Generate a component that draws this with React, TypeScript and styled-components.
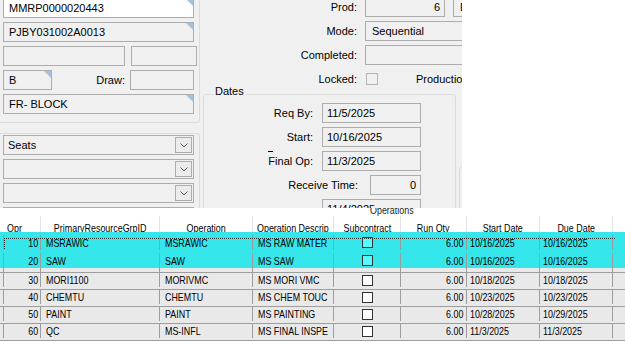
import React from "react";
import styled, { createGlobalStyle, css } from "styled-components";

const Global = createGlobalStyle`
  html, body { margin: 0; padding: 0; background: #fff; }
  body { font-family: "Liberation Sans", Arial, sans-serif; font-size: 11px; color: #000; }
  #root { width: 625px; height: 355px; overflow: hidden; }
`;

const Page = styled.div`
  width: 625px;
  height: 355px;
  display: flex;
  flex-direction: column;
  overflow: hidden;
  background: #fff;
`;

/* ---------- top form ---------- */
const Form = styled.div`
  flex: none;
  width: 462px;
  height: 208px;
  background: #f0f0f0;
  overflow: hidden;
  display: flex;
  gap: 3px;
`;

const LeftCol = styled.div`
  flex: none;
  width: 200px;
  display: flex;
  flex-direction: column;
`;

const Group = styled.div<{ $top?: boolean }>`
  box-sizing: border-box;
  width: 204px;
  margin-left: -4px;
  border: 1px solid #dcdcdc;
  border-radius: 3px;
  display: flex;
  flex-direction: column;
  gap: 4px;
  ${(p) =>
    p.$top
      ? css`
          margin-top: -9px;
          padding: 6px 5px 8px 6px;
        `
      : css`
          margin-top: 10px;
          padding: 1px 5px 0 6px;
          border-bottom: none;
          flex: 1;
        `}
`;

const Box = styled.div<{
  $w?: number;
  $white?: boolean;
  $tri?: boolean;
  $right?: boolean;
  $pad?: number;
}>`
  position: relative;
  box-sizing: border-box;
  flex: none;
  height: 20px;
  width: ${(p) => (p.$w ? `${p.$w}px` : "100%")};
  border: 1px solid #adadad;
  background: ${(p) => (p.$white ? "#fff" : "#f0f0f0")};
  display: flex;
  align-items: center;
  justify-content: ${(p) => (p.$right ? "flex-end" : "flex-start")};
  padding: 0 ${(p) => p.$pad ?? 4}px;
  white-space: nowrap;
  overflow: hidden;
  ${(p) =>
    p.$tri &&
    css`
      &::after {
        content: "";
        position: absolute;
        top: 0;
        right: 0;
        border-style: solid;
        border-width: 0 7px 7px 0;
        border-color: transparent #a6c0e1 transparent transparent;
      }
    `}
`;

const Row = styled.div<{ $gap?: number }>`
  display: flex;
  align-items: center;
  height: 20px;
  gap: ${(p) => p.$gap ?? 6}px;
  flex: none;
`;

const Label = styled.span<{ $w?: number; $ml?: number }>`
  flex: none;
  white-space: nowrap;
  text-align: right;
  ${(p) => (p.$w ? `width: ${p.$w}px;` : "")}
  ${(p) => (p.$ml ? `margin-left: ${p.$ml}px;` : "")}
`;

const Spacer = styled.span`
  flex: 1;
`;

const Combo = styled.div`
  box-sizing: border-box;
  flex: none;
  height: 20px;
  border: 1px solid #adadad;
  background: #f0f0f0;
  display: flex;
  align-items: center;
  padding: 0 1px 0 4px;
`;

const ComboText = styled.span`
  flex: 1;
`;

const DropBtn = styled.span`
  box-sizing: border-box;
  width: 17px;
  height: 16px;
  border: 1px solid #adadad;
  background: #ececec;
  display: flex;
  align-items: center;
  justify-content: center;
`;

const Chevron = () => (
  <svg width="8" height="5" viewBox="0 0 8 5">
    <path d="M0.5 0.5 L4 4 L7.5 0.5" fill="none" stroke="#555" strokeWidth="1" />
  </svg>
);

const MidCol = styled.div`
  flex: none;
  width: 259px;
  display: flex;
  flex-direction: column;
`;

const TopFields = styled.div`
  margin-top: -3px;
  display: flex;
  flex-direction: column;
  gap: 4px;
`;

const Check = styled.span<{ $ml?: number }>`
  box-sizing: border-box;
  flex: none;
  width: 12px;
  height: 12px;
  border: 1px solid #b5b5b5;
  background: #f0f0f0;
  margin-left: ${(p) => p.$ml ?? 0}px;
`;

const LowerRow = styled.div`
  margin-top: -3px;
  display: flex;
  gap: 3px;
  align-items: flex-start;
`;

const Fieldset = styled.fieldset`
  box-sizing: border-box;
  flex: none;
  width: 253px;
  min-width: 0;
  margin: 0;
  padding: 0 0 10px 0;
  border: 1px solid #dcdcdc;
  border-radius: 3px;
  display: flex;
  flex-direction: column;
  gap: 4px;
`;

const Legend = styled.legend`
  margin-left: 9px;
  padding: 0 2px 6px 2px;
  line-height: 11px;
`;

const DashLabel = styled.span`
  flex: none;
  width: 109px;
  display: flex;
  justify-content: flex-end;
  margin-bottom: 4px;
`;

const DashStack = styled.span`
  display: inline-flex;
  flex-direction: column;
  align-items: flex-start;
  line-height: 11px;
`;

const Dash = styled.span`
  width: 5px;
  height: 1px;
  background: #000;
  margin-bottom: 4px;
`;

const SideGroup = styled.div`
  box-sizing: border-box;
  flex: none;
  width: 30px;
  height: 60px;
  margin-top: 81px;
  border: 1px solid #dcdcdc;
  border-radius: 3px;
`;

/* ---------- grid ---------- */
const COLS = "3px 37px 119px 93px 81px 67px 66px 73px 73px 10px 3px";

const GridWrap = styled.div`
  flex: none;
  height: 133px;
  overflow: hidden;
  background: #fff;
  font-family: "Liberation Sans", Arial, sans-serif;
  font-size: 11px;
  display: flex;
  flex-direction: column;
`;

/* narrow grid lettering, like the reference's condensed grid font */
const Txt = styled.span<{ $o?: "left" | "right" | "center" }>`
  display: inline-block;
  white-space: nowrap;
  transform: scaleX(0.81);
  transform-origin: ${(p) => p.$o ?? "left"} center;
`;

const CaptionBar = styled.div`
  flex: none;
  height: 8px;
`;

const CaptionText = styled.div`
  margin: -3px 0 0 370px;
  line-height: 11px;
  color: #222;
`;

const HeadRow = styled.div`
  flex: none;
  display: grid;
  grid-template-columns: ${COLS};
  height: 16px;
`;

const HeadCell = styled.div<{ $align?: "left" | "center"; $line?: boolean }>`
  box-sizing: border-box;
  display: flex;
  align-items: flex-start;
  justify-content: ${(p) => (p.$align === "left" ? "flex-start" : "center")};
  padding: 6px 0 0 ${(p) => (p.$align === "left" ? 4 : 0)}px;
  line-height: 12px;
  white-space: nowrap;
  overflow: hidden;
  border-left: ${(p) => (p.$line ? "1px solid #e3e3e3" : "none")};
`;

const DataRow = styled.div<{ $sel?: boolean; $focus?: boolean }>`
  position: relative;
  flex: none;
  box-sizing: border-box;
  display: grid;
  grid-template-columns: ${COLS};
  ${(p) =>
    p.$sel
      ? css`
          height: 18px;
          background: #35e7eb;
          padding-top: 3px;
        `
      : css`
          height: 17px;
          background: #e9e9e9;
          border-bottom: 1px solid #9d9d9d;
          padding-bottom: 2px;
        `}
  ${(p) =>
    p.$focus &&
    css`
      &::after {
        content: "";
        position: absolute;
        left: 4px;
        right: 10px;
        top: 6px;
        height: 15px;
        border-top: 1px dotted #333;
        border-bottom: 1px dotted #333;
        border-left: 1px dotted #333;
        pointer-events: none;
      }
    `}
`;

const GapRow = styled.div`
  flex: none;
  box-sizing: border-box;
  height: 5px;
  display: grid;
  grid-template-columns: ${COLS};
  background: #e9e9e9;
  border-bottom: 1px solid #9d9d9d;
`;

const Cell = styled.div<{ $align?: "left" | "right" | "center"; $pl?: number; $pr?: number; $line?: boolean }>`
  box-sizing: border-box;
  display: flex;
  align-items: center;
  justify-content: ${(p) =>
    p.$align === "right" ? "flex-end" : p.$align === "center" ? "center" : "flex-start"};
  padding-left: ${(p) => p.$pl ?? 0}px;
  padding-right: ${(p) => p.$pr ?? 0}px;
  border-left: ${(p) => (p.$line === false ? "none" : "1px solid #9d9d9d")};
  white-space: nowrap;
  overflow: hidden;
  line-height: 12px;
`;

const GridCheck = styled.span<{ $sel?: boolean }>`
  box-sizing: border-box;
  width: 11px;
  height: 11px;
  border: 1px solid #333;
  background: ${(p) => (p.$sel ? "#55fbfd" : "#fff")};
`;

const GreenBar = styled.div`
  flex: 1;
  background: #90ee90;
`;

type Op = {
  opr: number;
  res: string;
  op: string;
  desc: string;
  qty: string;
  start: string;
  due: string;
};

const ops: Op[] = [
  { opr: 10, res: "MSRAWIC", op: "MSRAWIC", desc: "MS RAW MATER", qty: "6.00", start: "10/16/2025", due: "10/16/2025" },
  { opr: 20, res: "SAW", op: "SAW", desc: "MS SAW", qty: "6.00", start: "10/16/2025", due: "10/16/2025" },
  { opr: 30, res: "MORI1100", op: "MORIVMC", desc: "MS MORI VMC", qty: "6.00", start: "10/18/2025", due: "10/18/2025" },
  { opr: 40, res: "CHEMTU", op: "CHEMTU", desc: "MS CHEM TOUC", qty: "6.00", start: "10/23/2025", due: "10/23/2025" },
  { opr: 50, res: "PAINT", op: "PAINT", desc: "MS PAINTING", qty: "6.00", start: "10/28/2025", due: "10/29/2025" },
  { opr: 60, res: "QC", op: "MS-INFL", desc: "MS FINAL INSPE", qty: "6.00", start: "11/3/2025", due: "11/3/2025" },
];

const OpCells = ({ o, sel }: { o: Op; sel?: boolean }) => (
  <>
    <Cell $line={false} />
    <Cell $align="right" $pr={2}><Txt $o="right">{o.opr}</Txt></Cell>
    <Cell $pl={5}><Txt>{o.res}</Txt></Cell>
    <Cell $pl={5}><Txt>{o.op}</Txt></Cell>
    <Cell $pl={5}><Txt>{o.desc}</Txt></Cell>
    <Cell $align="center">
      <GridCheck $sel={sel} />
    </Cell>
    <Cell $align="right" $pr={3}><Txt $o="right">{o.qty}</Txt></Cell>
    <Cell $pl={3}><Txt>{o.start}</Txt></Cell>
    <Cell $pl={3}><Txt>{o.due}</Txt></Cell>
    <Cell />
    <Cell $line={false} />
  </>
);

export default function App() {
  return (
    <Page>
      <Global />
      <Form>
        <LeftCol>
          <Group $top>
            <Box $white $tri $pad={5}>MMRP0000020443</Box>
            <Box $tri $pad={5}>PJBY031002A0013</Box>
            <Row $gap={6}>
              <Box $w={122} />
              <Box $w={66} />
            </Row>
            <Row $gap={5}>
              <Box $w={49} $tri $pad={5}>B</Box>
              <Spacer />
              <Label>Draw:</Label>
              <Box $w={64} />
            </Row>
            <Box $tri $pad={5}>FR- BLOCK</Box>
          </Group>
          <Group>
            <Combo>
              <ComboText>Seats</ComboText>
              <DropBtn><Chevron /></DropBtn>
            </Combo>
            <Combo>
              <ComboText />
              <DropBtn><Chevron /></DropBtn>
            </Combo>
            <Combo>
              <ComboText />
              <DropBtn><Chevron /></DropBtn>
            </Combo>
            <Combo>
              <ComboText />
              <DropBtn><Chevron /></DropBtn>
            </Combo>
          </Group>
        </LeftCol>
        <MidCol>
          <TopFields>
            <Row $gap={8}>
              <Label $w={154}>Prod:</Label>
              <Box $w={80} $right>6</Box>
              <Box $w={40} $pad={6}>E</Box>
            </Row>
            <Row $gap={8}>
              <Label $w={154}>Mode:</Label>
              <Box $w={120} $pad={6}>Sequential</Box>
            </Row>
            <Row $gap={8}>
              <Label $w={154}>Completed:</Label>
              <Box $w={120} />
            </Row>
            <Row $gap={8}>
              <Label $w={154}>Locked:</Label>
              <Check $ml={1} />
              <Label $ml={30}>Production</Label>
            </Row>
          </TopFields>
          <LowerRow>
            <Fieldset>
              <Legend>Dates</Legend>
              <Row $gap={9}>
                <Label $w={109}>Req By:</Label>
                <Box $w={99}>11/5/2025</Box>
              </Row>
              <Row $gap={9}>
                <Label $w={109}>Start:</Label>
                <Box $w={99}>10/16/2025</Box>
              </Row>
              <Row $gap={9}>
                <DashLabel>
                  <DashStack>
                    <Dash />
                    <span>Final Op:</span>
                  </DashStack>
                </DashLabel>
                <Box $w={99}>11/3/2025</Box>
              </Row>
              <Row $gap={12}>
                <Label $w={154}>Receive Time:</Label>
                <Box $w={51} $right>0</Box>
              </Row>
              <Row $gap={9}>
                <Label $w={109} />
                <Box $w={99}>11/4/2025</Box>
              </Row>
            </Fieldset>
            <SideGroup />
          </LowerRow>
        </MidCol>
      </Form>
      <GridWrap>
        <CaptionBar>
          <CaptionText><Txt>Operations</Txt></CaptionText>
        </CaptionBar>
        <HeadRow>
          <HeadCell />
          <HeadCell $align="left"><Txt>Opr</Txt></HeadCell>
          <HeadCell $line><Txt $o="center">PrimaryResourceGrpID</Txt></HeadCell>
          <HeadCell $line><Txt $o="center">Operation</Txt></HeadCell>
          <HeadCell $line $align="left"><Txt>Operation Descrip</Txt></HeadCell>
          <HeadCell $line><Txt $o="center">Subcontract</Txt></HeadCell>
          <HeadCell $line><Txt $o="center">Run Qty</Txt></HeadCell>
          <HeadCell $line><Txt $o="center">Start Date</Txt></HeadCell>
          <HeadCell $line><Txt $o="center">Due Date</Txt></HeadCell>
          <HeadCell $line />
          <HeadCell />
        </HeadRow>
        {ops.slice(0, 2).map((o, i) => (
          <DataRow key={o.opr} $sel $focus={i === 0}>
            <OpCells o={o} sel />
          </DataRow>
        ))}
        <GapRow>
          <Cell $line={false} />
          <Cell />
          <Cell />
          <Cell />
          <Cell />
          <Cell />
          <Cell />
          <Cell />
          <Cell />
          <Cell />
          <Cell $line={false} />
        </GapRow>
        {ops.slice(2).map((o) => (
          <DataRow key={o.opr}>
            <OpCells o={o} />
          </DataRow>
        ))}
        <GreenBar />
      </GridWrap>
    </Page>
  );
}
